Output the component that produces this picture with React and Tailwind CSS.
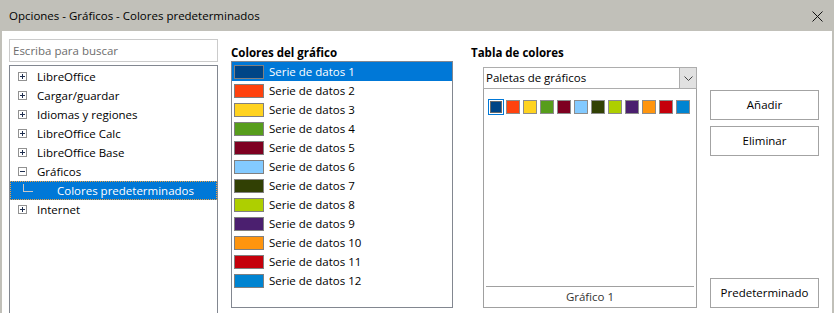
import React from 'react';

const series = [
  '#004586', '#ff420e', '#ffd320', '#579d1c', '#7e0021', '#83caff',
  '#314004', '#aecf00', '#4b1f6f', '#ff950e', '#c5000b', '#0084d1',
];

const tree = [
  { label: 'LibreOffice', sign: '+' },
  { label: 'Cargar/guardar', sign: '+' },
  { label: 'Idiomas y regiones', sign: '+' },
  { label: 'LibreOffice Calc', sign: '+' },
  { label: 'LibreOffice Base', sign: '+' },
  { label: 'Gráficos', sign: '-' },
  { label: 'Colores predeterminados', child: true },
  { label: 'Internet', sign: '+' },
];

function Expander({ sign }) {
  return (
    <span className="relative w-[9px] h-[9px] border border-[#919191] bg-white shrink-0">
      <span className="absolute left-[1px] top-[3px] w-[5px] h-px bg-[#1f2f4f]" />
      {sign === '+' && <span className="absolute left-[3px] top-[1px] w-px h-[5px] bg-[#1f2f4f]" />}
    </span>
  );
}

function Button({ children }) {
  return (
    <div className="h-[30px] border border-[#a3a3a3] bg-white flex items-center justify-center">
      {children}
    </div>
  );
}

export default function App() {
  return (
    <div className="w-[834px] h-[313px] overflow-hidden bg-white flex flex-col font-['Open_Sans',sans-serif] text-[11.5px] text-black">
      {/* title bar */}
      <div className="h-[31px] shrink-0 bg-[#c1c0b9] flex items-center justify-between pl-[9px] pr-[11px]">
        <span className="leading-none">Opciones - Gráficos - Colores predeterminados</span>
        <svg width="11" height="11" viewBox="0 0 11 11" className="mt-[1px]">
          <path d="M0.5 0.5 L10.5 10.5 M10.5 0.5 L0.5 10.5" stroke="#111" strokeWidth="1" />
        </svg>
      </div>

      <div className="flex-1 flex border-x-2 border-[#c1c0b9] pl-[7px] pt-[8px]">
        {/* left: search + tree */}
        <div className="w-[209px] flex flex-col gap-[3px] shrink-0">
          <div className="h-[23px] border border-[#cbcbcb] flex items-center pl-[3px] text-[#6d6d6d]">
            Escriba para buscar
          </div>
          <div className="h-[260px] border border-[#828790] pt-px">
            {tree.map((t) =>
              t.child ? (
                <div
                  key={t.label}
                  className="relative h-[19px] bg-[#0078d7] border border-dotted border-[#f0a040] flex items-center pl-[46px] text-white"
                >
                  <span className="absolute left-[12px] top-[2px] w-px h-[7px] bg-[#c8c8c8]" />
                  <span className="absolute left-[12px] top-[9px] w-[10px] h-px bg-[#c8c8c8]" />
                  {t.label}
                </div>
              ) : (
                <div key={t.label} className="h-[19px] flex items-center pl-[8px] gap-[10px]">
                  <Expander sign={t.sign} />
                  <span>{t.label}</span>
                </div>
              )
            )}
          </div>
        </div>

        {/* middle: chart colours */}
        <div className="ml-[13px] w-[222px] pt-[6px] shrink-0">
          <div className="h-[16px] leading-[16px] font-bold">Colores del gráfico</div>
          <div className="h-[247px] border border-[#828790]">
            {series.map((c, i) => (
              <div
                key={c}
                className={`h-[19px] flex items-center pl-[2px] gap-[5px] ${i === 0 ? 'bg-[#0078d7] text-white' : ''}`}
              >
                <span className="w-[30px] h-[14px] border border-[#808080]" style={{ background: c }} />
                <span>Serie de datos {i + 1}</span>
              </div>
            ))}
          </div>
        </div>

        {/* right: colour table */}
        <div className="ml-[18px] pt-[6px] shrink-0">
          <div className="h-[16px] leading-[16px] font-bold">Tabla de colores</div>
          <div className="flex ml-[12px] mt-[6px]">
            <div className="w-[214px] flex flex-col">
              <div className="h-[22px] border border-[#adadad] flex items-center justify-between pl-[2px]">
                <span>Paletas de gráficos</span>
                <span className="w-[17px] h-[20px] border-l border-[#adadad] bg-[#e1e1e1] flex items-center justify-center">
                  <svg width="9" height="5" viewBox="0 0 9 5">
                    <path d="M0.5 0.5 L4.5 4.5 L8.5 0.5" fill="none" stroke="#444" strokeWidth="1" />
                  </svg>
                </span>
              </div>
              <div className="h-[219px] border border-t-0 border-[#a0a0a0] flex flex-col px-[2px]">
                <div className="flex gap-[3px] pt-[11px] pl-[2px]">
                  {series.map((c, i) =>
                    i === 0 ? (
                      <span key={c} className="w-[16px] h-[16px] border border-[#0078d7] p-px -mr-px -mt-px">
                        <span className="block w-full h-full border border-[#6a6a6a]" style={{ background: c }} />
                      </span>
                    ) : (
                      <span
                        key={c}
                        className="w-[14px] h-[14px] border border-[#8c8c8c]"
                        style={{ background: c }}
                      />
                    )
                  )}
                </div>
                <div className="flex-1" />
                <div className="border-t border-[#a0a0a0] h-[21px] flex items-center justify-center text-[#333]">
                  Gráfico 1
                </div>
              </div>
            </div>

            <div className="ml-[13px] w-[109px] flex flex-col gap-[6px] pt-[23px]">
              <Button>Añadir</Button>
              <Button>Eliminar</Button>
              <div className="flex-1" />
              <Button>Predeterminado</Button>
            </div>
          </div>
        </div>
      </div>
    </div>
  );
}
